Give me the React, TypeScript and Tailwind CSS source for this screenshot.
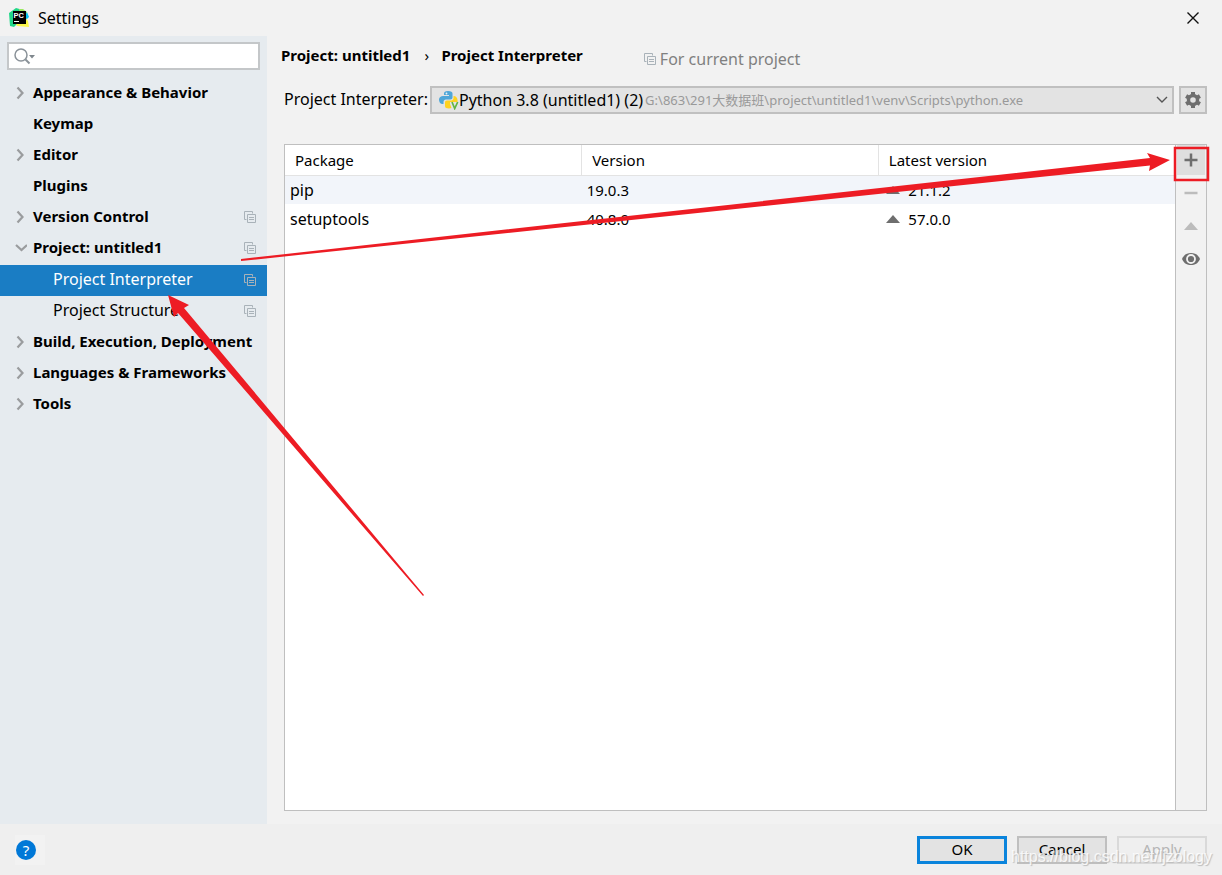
type TreeItem = { label: string; arrow?: 'open' | 'closed'; child?: boolean; scoped?: boolean; active?: boolean };

const TREE: TreeItem[] = [
  { label: 'Appearance & Behavior', arrow: 'closed' },
  { label: 'Keymap' },
  { label: 'Editor', arrow: 'closed' },
  { label: 'Plugins' },
  { label: 'Version Control', arrow: 'closed', scoped: true },
  { label: 'Project: untitled1', arrow: 'open', scoped: true },
  { label: 'Project Interpreter', child: true, scoped: true, active: true },
  { label: 'Project Structure', child: true, scoped: true },
  { label: 'Build, Execution, Deployment', arrow: 'closed' },
  { label: 'Languages & Frameworks', arrow: 'closed' },
  { label: 'Tools', arrow: 'closed' },
];

const PACKAGES = [
  { name: 'pip', version: '19.0.3', latest: '21.1.2' },
  { name: 'setuptools', version: '40.8.0', latest: '57.0.0' },
];

function ScopeIcon() {
  return (
    <svg width="12" height="12" viewBox="0 0 12 12" fill="none" stroke="#a9b2b9" className="shrink-0">
      <path d="M2.5 8.5h-2v-8h8v2" />
      <path d="M3.5 3.5h8v8h-8z" />
      <path d="M5 6.500h5M5 8.500h5" />
    </svg>
  );
}

function AppIcon() {
  return (
    <svg width="20" height="20" viewBox="0 0 20 20">
      <path d="M0 5 7 0l7 2 3 3-2 13-8-1-2 2-4-1z" fill="#21d789" />
      <path d="m16 5 2-1 2 5-3 3z" fill="#07c3f2" />
      <path d="M10 1h4l4 3-1 2h-6z" fill="#9be860" />
      <path d="m16 9 3 4 1 6-12-1-1-2z" fill="#fcf84a" />
      <path d="M4 3h13v13H4z" fill="#000" />
      <text x="4.500" y="9.500" fontSize="7.500" fontWeight="700" fill="#fff" fontFamily="Liberation Sans, sans-serif">PC</text>
      <path d="M5 13.500h5" stroke="#fff" />
    </svg>
  );
}

function PythonIcon() {
  return (
    <svg width="20" height="20" viewBox="0 0 20 20" className="shrink-0">
      <path d="M9 1C6 1 5 2 5 3.500V5h5v1H4C2 6 0 7.500 0 9.500S1 14 3 14h1.500v-2c0-1.500 1-2.500 2.500-2.500h4.500c1.200 0 2-.8 2-2v-4C13.500 2 12 1 9 1z" fill="#4ea6d8" />
      <path d="M14.500 6v2c0 1.500-1 2.500-2.500 2.500H8c-1.200 0-2 .8-2 2V16c0 1.800 1.500 2.500 4 2.500 1 0 2-.2 2.500-.5l-1.500-4v-2h7.500V10c0-2-1.500-4-4-4z" fill="#ffd21f" />
      <circle cx="7.500" cy="3.500" r=".9" fill="#e6f1f7" />
      <path d="m13 12 2.700 6.500 3-6.500" fill="none" stroke="#62b543" strokeWidth="1.700" />
    </svg>
  );
}

function GearIcon() {
  return (
    <svg width="18" height="18" viewBox="0 0 18 18" fill="none" stroke="#6e6e6e">
      <circle cx="9" cy="9" r="4.500" strokeWidth="3.400" />
      <path d="M9 1v2.500M9 14.500V17M2.100 5l2.100 1.250M13.800 11.750 15.900 13M2.100 13l2.100-1.250M13.800 6.250 15.900 5" strokeWidth="4" />
    </svg>
  );
}

function TreeArrow({ open }: { open: boolean }) {
  return (
    <svg width="14" height="14" viewBox="0 0 14 14" fill="none" stroke="#9a9c9e" strokeWidth="2.200">
      <path d={open ? 'm3 4 5.500 5L14 4' : 'm4.500 1.500 5 5.500-5 5.500'} />
    </svg>
  );
}

function Sidebar() {
  return (
    <aside className="w-[267px] shrink-0 bg-[#e6ebef] pt-1.5">
      <label className="mx-[7px] flex h-7 items-center border-2 border-[#c4c7c9] bg-white pl-[5px]">
        <svg width="22" height="18" viewBox="0 0 22 18" fill="none" stroke="#8a9299" strokeWidth="1.500">
          <circle cx="7" cy="8" r="6" />
          <path d="m11.500 12.500 4 4" strokeWidth="2" />
          <path d="M15 8h6l-3 3.500z" fill="#7f878d" stroke="none" />
        </svg>
        <input type="text" aria-label="Search settings" className="min-w-0 flex-1 bg-transparent outline-none" />
      </label>
      <nav className="mt-2 flex h-[343px] flex-col justify-between">
        {TREE.map((t) => (
          <button
            key={t.label}
            className={`flex h-[31px] w-full shrink-0 items-center pr-[11px] pb-0.5 text-left whitespace-nowrap ${t.active ? 'bg-[#1a7dc4] text-white' : ''} ${
              t.child ? 'pl-[53px] text-[16px]' : 'pl-[13px] font-bold'
            }`}
          >
            {!t.child && <span className="w-5 shrink-0">{t.arrow && <TreeArrow open={t.arrow === 'open'} />}</span>}
            <span className="flex-1 pb-0.5">{t.label}</span>
            {t.scoped && <ScopeIcon />}
          </button>
        ))}
      </nav>
    </aside>
  );
}

function InterpreterRow() {
  return (
    <div className="mt-[17px] flex items-center text-[16px]">
      <label htmlFor="interpreter" className="mr-0.5 shrink-0 pb-0.5">Project Interpreter:</label>
      <div className="flex h-7 min-w-0 flex-1 items-center border-2 border-[#c0c0c0] bg-[#e3e3e3] pr-1 pl-[7px]">
        <PythonIcon />
        <select id="interpreter" className="field-sizing-content shrink-0 appearance-none bg-transparent outline-none">
          <option>Python 3.8 (untitled1) (2)</option>
        </select>
        <span className="ml-0.5 flex-1 truncate text-[13px] text-[#999]">G:\863\291大数据班\project\untitled1\venv\Scripts\python.exe</span>
        <svg width="12" height="8" viewBox="0 0 12 8" fill="none" stroke="#555" strokeWidth="1.400"><path d="m1 1 5 5 5-5" /></svg>
      </div>
      <button aria-label="Interpreter options" className="ml-[5px] flex size-7 items-center justify-center border-2 border-[#c0c0c0] bg-[#e3e3e3]">
        <GearIcon />
      </button>
    </div>
  );
}

function PackageTable() {
  return (
    <div className="min-w-0 flex-1 bg-white">
      <table className="w-full table-fixed border-collapse text-left">
        <thead>
          <tr className="h-[30px] border-b border-[#e3e3e3]">
            <th className="border-r border-[#e3e3e3] pl-2.5 font-normal">Package</th>
            <th className="border-r border-[#e3e3e3] pl-2.5 font-normal">Version</th>
            <th className="pl-2.5 font-normal">Latest version</th>
          </tr>
        </thead>
        <tbody>
          {PACKAGES.map((p) => (
            <tr key={p.name} className="h-[29px] odd:bg-[#f2f5fa]">
              <td className="pl-[5px] text-[16px]">{p.name}</td>
              <td className="pl-[5px]">{p.version}</td>
              <td className="pl-2">
                <span className="flex items-center gap-2">
                  <svg width="14" height="8" viewBox="0 0 14 8"><path d="M0 8 7 0l7 8z" fill="#6e6e6e" /></svg>
                  {p.latest}
                </span>
              </td>
            </tr>
          ))}
        </tbody>
      </table>
    </div>
  );
}

function PackageActions() {
  const cls = 'flex h-[30px] w-full items-center justify-center';
  return (
    <div className="flex w-[31px] shrink-0 flex-col gap-[3px] border-l border-[#bfbfbf] px-px">
      <button aria-label="Install package" className={`${cls} bg-[#dedede]`}>
        <svg width="14" height="14" viewBox="0 0 14 14"><path d="M7 .500v13M.500 7h13" stroke="#6e6e6e" strokeWidth="2.500" /></svg>
      </button>
      <button aria-label="Uninstall package" className={cls}>
        <svg width="14" height="14" viewBox="0 0 14 14"><path d="M.500 7h13" stroke="#bcbcbc" strokeWidth="2.500" /></svg>
      </button>
      <button aria-label="Upgrade package" className={cls}>
        <svg width="14" height="8" viewBox="0 0 14 8"><path d="M0 8 7 0l7 8z" fill="#bcbcbc" /></svg>
      </button>
      <button aria-label="Show early releases" className={cls}>
        <svg width="18" height="14" viewBox="0 0 18 14" fill="none">
          <path d="M0 7c2-4.500 5-6 9-6s7 1.500 9 6c-2 4.500-5 6-9 6s-7-1.500-9-6z" fill="#6e6e6e" />
          <circle cx="9" cy="7" r="4" stroke="#f2f2f2" strokeWidth="1.800" />
        </svg>
      </button>
    </div>
  );
}

function Annotations() {
  return (
    <svg className="pointer-events-none absolute inset-0 h-full w-full" fill="#ed1c24">
      <path d="M241 259 1150 158 1147 153 1170 160 1149 171 1150 165.500 241 261z" />
      <path d="M168 295 189 305 184 308 424 595 423 596 178 313 174 317z" />
      <path d="M1175 148h33v32h-33z" fill="none" stroke="#ed1c24" strokeWidth="2.500" />
    </svg>
  );
}

export default function App() {
  return (
    <div className="relative flex h-screen flex-col overflow-hidden bg-[#f2f2f2] font-['Noto_Sans','Noto_Sans_CJK_SC',sans-serif] text-[15px] leading-5 text-black">
      <header className="flex h-9 shrink-0 items-center pr-[23px] pl-[9px]">
        <AppIcon />
        <h1 className="ml-[9px] flex-1 text-[16px]">Settings</h1>
        <button aria-label="Close">
          <svg width="12" height="12" viewBox="0 0 12 12" stroke="#111" strokeWidth="1.400"><path d="m.500.500 11 11M11.500.500l-11 11" /></svg>
        </button>
      </header>

      <div className="flex min-h-0 flex-1">
        <Sidebar />
        <main className="flex min-w-0 flex-1 flex-col pr-[15px] pb-[13px] pl-[17px]">
          <div className="flex pt-[9px] font-bold">
            <span className="-ml-[3px]">Project: untitled1</span>
            <span className="w-[31px] pl-0.5 text-center font-normal">›</span>
            <span>Project Interpreter</span>
            <span className="ml-[61px] flex items-center gap-1 pt-1 text-[16px] font-normal text-[#808080]">
              <ScopeIcon />
              For current project
            </span>
          </div>
          <InterpreterRow />
          <div className="mt-[30px] flex flex-1 border border-[#bfbfbf]">
            <PackageTable />
            <PackageActions />
          </div>
        </main>
      </div>

      <footer className="flex h-[51px] shrink-0 items-center gap-2.5 bg-[#efefef] px-[15px]">
        <button aria-label="Help" className="mr-auto flex size-[30px] items-center bg-[#f2f2f2] pl-px">
          <span className="flex size-5 items-center justify-center rounded-full bg-[#0078d7] text-white">?</span>
        </button>
        <button className="h-7 w-[90px] border-[3px] border-[#0a84dc] bg-[#e3e3e3] pb-0.5">OK</button>
        <button className="h-7 w-[90px] border-2 border-[#bfbfbf] bg-[#e3e3e3] pb-0.5">Cancel</button>
        <button disabled className="h-7 w-[90px] border-2 border-[#d9d9d9] pb-0.5 text-[#b5b5b5]">Apply</button>
      </footer>

      <span className="pointer-events-none absolute right-2.5 bottom-2 font-['Liberation_Sans',sans-serif] text-[16px] text-white/80 [text-shadow:1px_1px_1px_#bbb]">https://blog.csdn.net/ljzology</span>
      <Annotations />
    </div>
  );
}
